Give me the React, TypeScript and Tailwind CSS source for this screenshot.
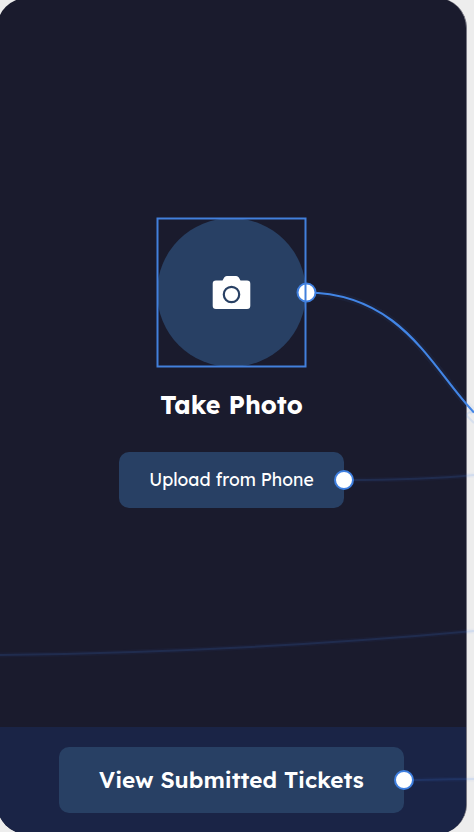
function Handle({ cx, cy }: { cx: number; cy: number }) {
  return <circle cx={cx} cy={cy} r="9" fill="white" stroke="#3f7fdf" strokeWidth="2" />;
}

function CameraIcon() {
  return (
    <svg className="h-[33px] w-[39px]" viewBox="0 0.5 39 33" fill="none">
      <path
        d="M4 5H10.5L12.2 2Q13 .5 14.8 .5H24.2Q26 .5 26.8 2L28.5 5H35Q38.3 5 38.3 8.3V30.2Q38.3 33.5 35 33.5H4Q.7 33.5 .7 30.2V8.3Q.7 5 4 5Z"
        fill="white"
      />
      <circle cx="19.5" cy="19" r="7.7" stroke="#284064" strokeWidth="2.2" />
    </svg>
  );
}

function Connections() {
  return (
    <svg className="pointer-events-none absolute inset-0 z-10" width="474" height="832" viewBox="0 0 474 832" fill="none">
      <g stroke="#4288f5" strokeOpacity="0.04" strokeWidth="5">
        <path d="M0 655C160 653 320 645 474 631" />
        <path d="M344 480C394 480 434 479 474 475" />
        <path d="M404 780C430 780 450 779 474 779" />
      </g>
      <g stroke="#4288f5" strokeOpacity="0.13" strokeWidth="2">
        <path d="M0 655C160 653 320 645 474 631" />
        <path d="M344 480C394 480 434 479 474 475" />
        <path d="M404 780C430 780 450 779 474 779" />
        <path d="M474 412Q466 412 467 416L474 423" />
      </g>
      <path d="M306 292.5C402 293 432 369 474 412.5" stroke="#4288e8" strokeOpacity="0.06" strokeWidth="7" />
      <path d="M306 292.5C402 293 432 369 474 412.5" stroke="#4285e5" strokeWidth="2.2" />
      <Handle cx={306.5} cy={292.5} />
      <Handle cx={344} cy={480} />
      <Handle cx={404} cy={780} />
      <rect x="157.5" y="218.5" width="148" height="148" stroke="#4280dc" strokeWidth="2" />
    </svg>
  );
}

export default function App() {
  return (
    <div className="relative h-[832px] w-[474px] overflow-hidden bg-[#ededed] font-['Lexend','Inter',sans-serif] text-white">
      <div className="-mt-[2px] -ml-[3px] flex h-[836px] w-[470px] flex-col overflow-hidden rounded-[30px] border-r border-[#777783] bg-[#1a1b2d]">
        <main className="flex h-[729px] shrink-0 flex-col items-center pt-[220px]">
          <div className="flex size-[149px] items-center justify-center rounded-full bg-[#284064]">
            <CameraIcon />
          </div>
          <h1 className="mt-[22px] text-[25px] leading-8 font-bold whitespace-nowrap">Take Photo</h1>
          <div className="mt-[31px] flex h-[56px] w-[225px] items-center justify-center rounded-[10px] bg-[#284064] pb-[2px]">
            <span className="text-[17.5px] leading-6 font-normal whitespace-nowrap">Upload from Phone</span>
          </div>
        </main>
        <footer className="flex h-[107px] shrink-0 justify-center bg-[#1a2446] pt-[20px]">
          <div className="flex h-[66px] w-[345px] items-center justify-center rounded-[10px] bg-[#284064]">
            <span className="text-[22.5px] leading-7 font-semibold whitespace-nowrap">View Submitted Tickets</span>
          </div>
        </footer>
      </div>
      <Connections />
    </div>
  );
}
